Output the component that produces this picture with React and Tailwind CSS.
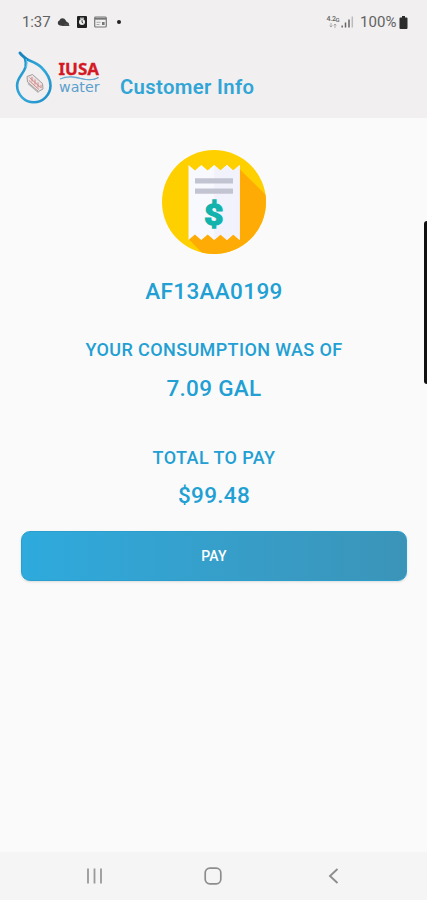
import React from "react"

const StatusBar = () => (
  <div className="flex h-11 items-center justify-between pl-[22px] pr-[19px] text-[#626262]">
    <div className="flex items-center">
      <span className="w-[29px] text-[15px] tracking-[-0.1px]">1:37</span>
      <svg className="ml-[6px]" width="13" height="9" viewBox="0 0 13 9">
        <path
          d="M3 7.500a2.600 2.600 0 0 1-.6-5A3.400 3.400 0 0 1 8.600 2.200L9.800 4a2.200 2.200 0 0 1 1.200 4H6Z"
          fill="#3c3c3c"
        />
        <path d="M6.500 7.500 8 5.500h3.500l1 2.500H7Z" fill="#4a4a4a" />
      </svg>
      <svg className="ml-[7px]" width="10" height="12" viewBox="0 0 10 12">
        <rect width="10" height="12" rx="1" fill="#202020" />
        <circle cx="5" cy="6" r="3" fill="#ececec" />
        <path d="M3 2.200h4" stroke="#ececec" />
        <path d="M5 4.200v2l1.200 1" fill="none" stroke="#333" />
      </svg>
      <svg className="ml-[7px]" width="13" height="12" viewBox="0 0 13 12">
        <rect x=".7" y="1" width="11.600" height="10" rx="1" fill="none" stroke="#777" strokeWidth="1.200" />
        <path d="M1 2.700h11" stroke="#777" strokeWidth="2" />
        <path d="M2.500 6.300h4M2.500 8.500h3" stroke="#aaa" />
        <rect x="8" y="6" width="2.600" height="3" fill="#777" />
      </svg>
      <span className="ml-[10px] size-[3.5px] rounded-full bg-[#222]" />
    </div>
    <div className="flex items-center">
      <div className="mr-px flex w-[14px] flex-col items-center">
        <span className="text-[7px] leading-[7px] font-medium tracking-[-0.3px]">
          4.2<span className="align-top text-[6px]">G</span>
        </span>
        <svg width="8" height="5" viewBox="0 0 8 5">
          <path d="M2 0v4M.6 2.600 2 4l1.400-1.400M6 5V1M4.600 2.400 6 1l1.400 1.400" fill="none" stroke="#999" strokeWidth=".8" />
        </svg>
      </div>
      <svg width="13" height="12" viewBox="0 0 13 12">
        <path d="M1.200 11.500v-2M4.500 11.500v-5" stroke="#666" strokeWidth="1.500" />
        <path d="M8 11.500V3.500" stroke="#666" strokeWidth="1.500" />
        <path d="M11.300 11.500V.5" stroke="#bbb" strokeWidth="1.500" />
      </svg>
      <span className="ml-[6px] w-[39px] text-[15px] tracking-[0.1px]">100%</span>
      <svg width="9" height="13" viewBox="0 0 9 13">
        <path d="M3 0h3v1.500h1.500a1 1 0 0 1 1 1V12a1 1 0 0 1-1 1h-6a1 1 0 0 1-1-1V2.500a1 1 0 0 1 1-1H3Z" fill="#2c2c2c" />
      </svg>
    </div>
  </div>
)

const Logo = () => (
  <svg width="86" height="56" viewBox="0 0 86 56">
    <defs>
      <linearGradient id="drop" x1="0" y1="0" x2="1" y2="1">
        <stop offset="0" stopColor="#1c8fc6" />
        <stop offset=".5" stopColor="#35a9dc" />
        <stop offset="1" stopColor="#1b8cc5" />
      </linearGradient>
      <linearGradient id="wave" x1="0" y1="0" x2="1" y2="0">
        <stop offset="0" stopColor="#62afd8" />
        <stop offset="1" stopColor="#4385b8" />
      </linearGradient>
    </defs>
    {/* water drop with the meter tag inside */}
    <path
      d="M10 9.500C15 12 21 13 26.500 18.500C32 24 35.500 29 35.500 36.500A16.700 16.700 0 0 1 2.100 36.500C2.100 28 8.500 25.500 10.500 18C11.300 14 10.500 11 10 9.500Z"
      fill="none"
      stroke="url(#drop)"
      strokeWidth="2.600"
      strokeLinejoin="round"
    />
    <path d="M5 4C7 7 9.500 8 12 10.500" fill="none" stroke="#1b85bd" strokeWidth="3" strokeLinecap="round" />
    <path d="M11 10c1.500 3 1 6 0 9" fill="none" stroke="#5cc0e8" strokeWidth="1.200" />
    <path
      d="M12 27.500 17.500 25.500 27.500 34.500 28 40 23.500 42.500 12.500 33Z"
      fill="#eae2e2"
      stroke="#a39d9d"
      strokeWidth="1"
      strokeLinejoin="round"
    />
    <path d="M13 34.500 23.500 43.500" stroke="#b8b2b2" strokeWidth="1.400" />
    <path
      d="M14.500 28.500 25.500 38.500M14 31.500 24 40.500M17 28v4.500M20 30.500v5M23 33.500v5M26 36v3"
      stroke="#d27f7f"
      strokeWidth=".9"
    />
    <text
      x="43.500"
      y="25.700"
      fill="#d41924"
      stroke="#d41924"
      strokeWidth=".3"
      fontSize="15.500"
      fontWeight="700"
      fontFamily="'Noto Sans', sans-serif"
      textLength="40.500"
      lengthAdjust="spacingAndGlyphs"
    >
      IUSA
    </text>
    <path d="M45 30C53 26.500 60 28 67 29.800S79 31 83.500 28.500" fill="none" stroke="url(#wave)" strokeWidth="1.100" />
    <path d="M58 28.500c8 .5 15 4 24 1" fill="none" stroke="#75b6da" strokeWidth=".7" />
    <text
      x="44"
      y="42.500"
      fill="#5b9fce"
      fontSize="14"
      fontFamily="'DejaVu Sans', sans-serif"
      textLength="40.500"
      lengthAdjust="spacingAndGlyphs"
    >
      water
    </text>
  </svg>
)

const Receipt = () => (
  <svg width="104" height="104" viewBox="0 0 104 104">
    <defs>
      <clipPath id="disc">
        <circle cx="52" cy="52" r="52" />
      </clipPath>
    </defs>
    <g clipPath="url(#disc)">
      <rect width="104" height="104" fill="#ffd000" />
      <path d="M77.500 19 110 51v60H48L26.500 89Z" fill="#ffab06" />
    </g>
    <path
      d="M26.500 15l6.400 5.500 6.400-5.500 6.400 5.500 6.400-5.500 6.400 5.500 6.400-5.500 6.400 5.500 6.400-5.500V90l-6.400-5.500-6.400 5.500-6.400-5.500-6.400 5.500-6.400-5.500-6.400 5.500-6.400-5.500-6.400 5.500Z"
      fill="#f8f8ff"
    />
    <path d="M52.100 15l6.400 5.500 6.400-5.500 6.400 5.500 6.400-5.500V90l-6.400-5.500-6.400 5.500-6.400-5.500-6.400 5.500Z" fill="#f1f2fc" />
    <path d="M33 30.800h38M33 41.200h38" stroke="#c3c4d2" strokeWidth="5.200" />
    <text
      x="51.800"
      y="74.500"
      textAnchor="middle"
      fill="#11b3ac"
      stroke="#11b3ac"
      strokeWidth="1.600"
      fontSize="29"
      fontWeight="700"
      fontFamily="Roboto, sans-serif"
      textLength="19"
      lengthAdjust="spacingAndGlyphs"
    >
      $
    </text>
  </svg>
)

const NavBar = () => (
  <div className="flex h-12 items-center justify-between bg-[#f5f5f5] pl-[86px] pr-[87px]">
    <svg width="17" height="16" viewBox="0 0 17 16">
      <path d="M2 .5v15M8.500 .5v15M15 .5v15" stroke="#999" strokeWidth="1.800" />
    </svg>
    <svg className="-ml-1" width="18" height="18" viewBox="0 0 18 18">
      <rect x="1.200" y="1.200" width="15.600" height="15.600" rx="4.500" fill="none" stroke="#8d8d8d" strokeWidth="1.700" />
    </svg>
    <svg width="14" height="16" viewBox="0 0 14 16">
      <path d="M11.500 1 4 8l7.500 7" fill="none" stroke="#8d8d8d" strokeWidth="1.900" />
    </svg>
  </div>
)

export default function App() {
  return (
    <div className="relative flex h-[900px] w-[427px] flex-col overflow-hidden bg-[#fafafa] font-['Roboto',sans-serif]">
      <header className="h-[118px] bg-[#f1efef]">
        <StatusBar />
        <div className="flex items-start pl-[15px] pt-[5px]">
          <Logo />
          <h1 className="ml-[19px] mt-[26px] text-[20.3px] leading-6 font-semibold tracking-[0.35px] text-[#31a5d6]">
            Customer Info
          </h1>
        </div>
      </header>

      <main className="flex flex-1 flex-col items-center pt-8 pl-px font-medium text-[#229fd3]">
        <Receipt />
        <p className="mt-[21px] text-[22.5px] leading-8 tracking-[0.35px]">AF13AA0199</p>
        <p className="mt-[31px] text-[18px] leading-6 tracking-[0.38px]">YOUR CONSUMPTION WAS OF</p>
        <p className="mt-[10px] text-[22.5px] leading-8 tracking-[0.3px]">7.09 GAL</p>
        <p className="mt-[42px] text-[18px] leading-6 tracking-[0.38px]">TOTAL TO PAY</p>
        <p className="mt-[9px] text-[22.5px] leading-8 tracking-[0.3px]">$99.48</p>
        <button className="mt-[20px] h-[50px] w-[386px] rounded-[9px] border border-[#2a9fcd] bg-gradient-to-r from-[#2eaadd] to-[#3b94b8] text-[14px] font-medium tracking-[0.2px] text-white shadow-sm">
          PAY
        </button>
      </main>

      <NavBar />

      {/* edge panel handle */}
      <div className="absolute right-0 top-[221px] h-[163px] w-[3px] rounded-l-[3px] bg-[#111]" />
    </div>
  )
}
